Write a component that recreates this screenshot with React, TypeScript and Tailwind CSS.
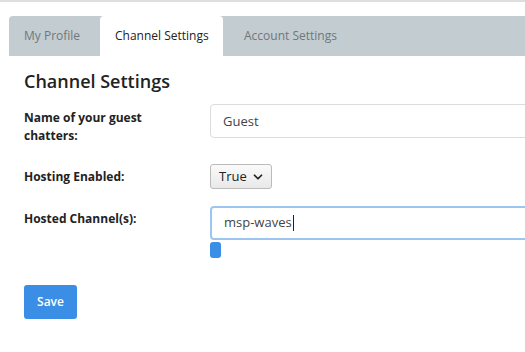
import { ChevronDown } from 'lucide-react';

const tabs = [
  { label: 'My Profile', w: 'w-[91px] pl-[15px]' },
  { label: 'Channel Settings', w: 'w-[123px] pl-[15px]' },
  { label: 'Account Settings', w: 'w-[130px] pl-[21px]' },
];

export default function App() {
  return (
    <div className="w-[525px] h-[352px] overflow-hidden bg-white border-t-2 border-[#dcdfe1] text-[#333] font-['Open_Sans',sans-serif]">
      <div className="mt-[14px] ml-[9px] flex h-[40px] bg-[#c3ccd1] rounded-tl-[4px]">
        {tabs.map((t, i) => (
          <div
            key={t.label}
            className={
              i === 1
                ? `${t.w} flex items-center bg-white text-[#222] text-[12px] rounded-t-[4px]`
                : `${t.w} flex items-center text-[#6f777c] text-[12px]`
            }
          >
            {t.label}
          </div>
        ))}
      </div>

      <div className="px-[24px]">
        <h2 className="mt-[12px] text-[18px] font-semibold text-[#222] leading-[26px]">Channel Settings</h2>

        <div className="mt-[10px] flex">
          <label className="w-[186px] shrink-0 pt-[5px] text-[12px] font-bold leading-[18px] text-[#222]">
            Name of your guest<br />chatters:
          </label>
          <input
            className="h-[34px] w-[340px] shrink-0 border border-[#dcdcdc] rounded-[4px] px-[12px] text-[13px] text-[#444] outline-none"
            defaultValue="Guest"
          />
        </div>

        <div className="mt-[19px] flex items-center">
          <label className="w-[186px] shrink-0 text-[12px] font-bold text-[#222]">Hosting Enabled:</label>
          <div className="flex h-[25px] w-[62px] items-center justify-between rounded-[3px] border border-[#bbb] bg-gradient-to-b from-[#fafafa] to-[#e9e9e9] pl-[8px] pr-[6px] text-[13px] text-[#222]">
            <span>True</span>
            <ChevronDown size={14} strokeWidth={3} />
          </div>
        </div>

        <div className="mt-[17px] flex">
          <label className="w-[186px] shrink-0 pt-[4px] text-[12px] font-bold leading-[18px] text-[#222]">Hosted Channel(s):</label>
          <div className="flex flex-col">
            <div className="flex h-[34px] w-[340px] items-center rounded-[4px] border-2 border-[#9cc6f0] px-[12px] text-[13px] text-[#444]">
              msp-waves<span className="ml-px h-[16px] w-px bg-[#222]" />
            </div>
            <div className="mt-[2px] h-[16px] w-[11px] rounded-[3px] bg-[#3a8ee6]" />
          </div>
        </div>

        <button className="mt-[27px] h-[34px] w-[53px] rounded-[3px] bg-[#3a8ee6] text-[12px] font-semibold text-white">
          Save
        </button>
      </div>
    </div>
  );
}
